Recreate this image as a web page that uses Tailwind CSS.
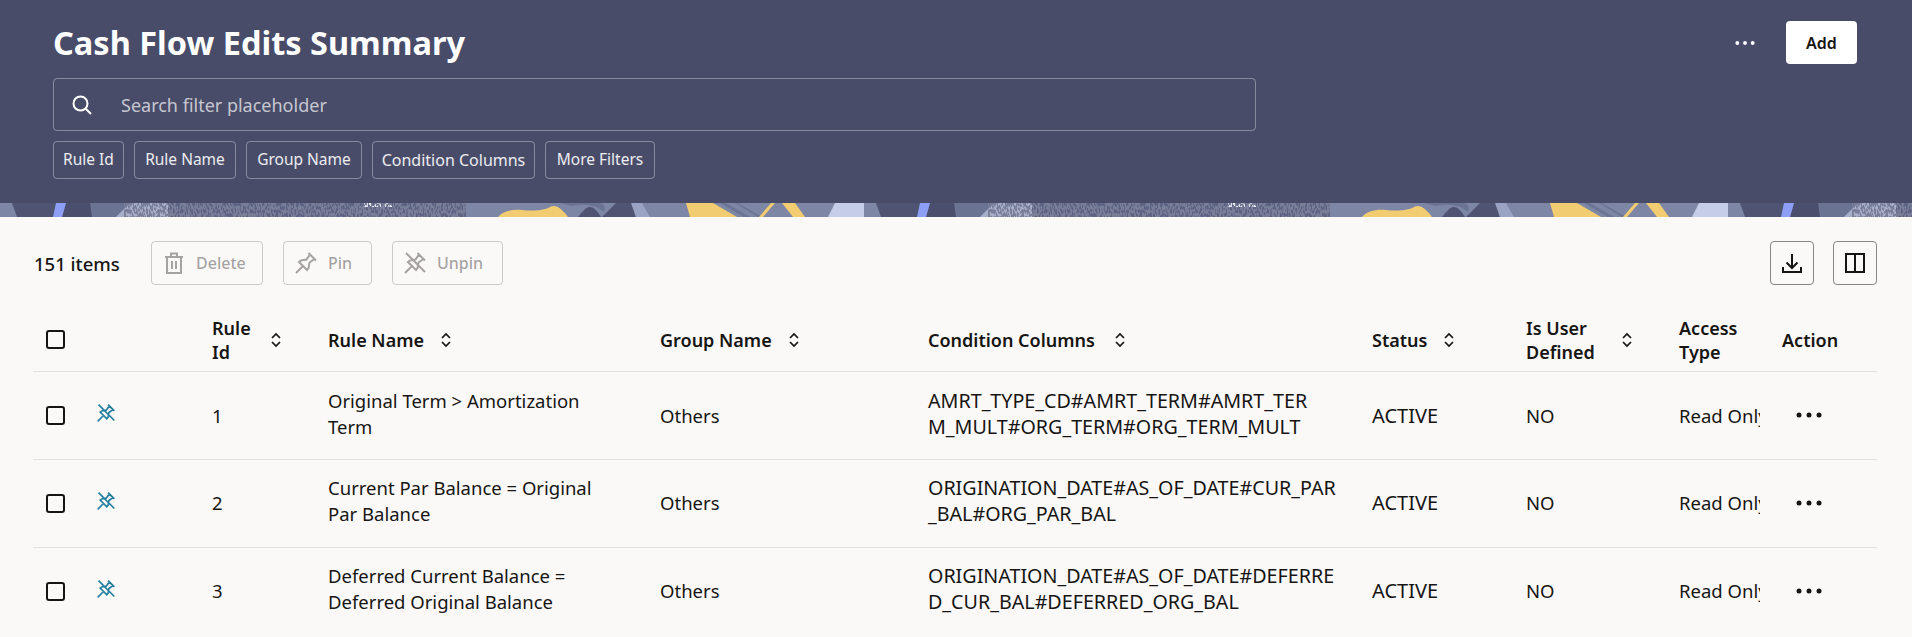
<!DOCTYPE html>
<html lang="en">
<head>
<meta charset="utf-8">
<title>Cash Flow Edits Summary</title>
<script src="https://cdn.jsdelivr.net/npm/@tailwindcss/browser@4"></script>
</head>
<body class="m-0 h-[637px] overflow-hidden bg-[#fbf9f8] font-['Noto_Sans',sans-serif] text-[#161513]">
<svg width="0" height="0" class="absolute">
  <defs>
    <symbol id="i-sort" viewBox="0 0 12 16"><path d="M2 6l4-4 4 4M2 10l4 4 4-4" fill="none" stroke="currentColor" stroke-width="1.7"/></symbol>
    <symbol id="i-unpin" viewBox="0 0 24 24"><path d="M14.500 2L22 9.500M16 3.500L12.500 8.500 7 9.500 5 11 13 19 14.500 17 15.500 11.500 20.500 8M9 15L2 22M3 2L22 21" fill="none" stroke="currentColor" stroke-width="2"/></symbol>
    <symbol id="i-dots" viewBox="0 0 26 6"><circle cx="3" cy="3" r="2.500" fill="currentColor"/><circle cx="13" cy="3" r="2.500" fill="currentColor"/><circle cx="23" cy="3" r="2.500" fill="currentColor"/></symbol>
  </defs>
</svg>

<header class="h-[203px] bg-[#484c69] pl-[53px] pr-[55px] pt-[21px]">
  <div class="flex h-[43px] items-center justify-between">
    <h1 class="text-[32.500px] leading-[43px] font-bold text-white">Cash Flow Edits Summary</h1>
    <div class="flex items-center gap-[31px]">
      <svg class="h-[6px] w-[20px] text-white" viewBox="0 0 26 6"><use href="#i-dots"/></svg>
      <button class="h-[43px] w-[71px] rounded-[4px] bg-white text-[16px] font-semibold text-[#161513]">Add</button>
    </div>
  </div>
  <div class="mt-[14px] flex h-[53px] w-[1203px] items-center rounded-[4px] border border-white/35 pl-[16px]">
    <svg class="h-[24px] w-[24px] text-white" viewBox="0 0 24 24" fill="none" stroke="currentColor" stroke-width="2"><circle cx="10.500" cy="10.500" r="7"/><path d="M15.500 15.500L21 21"/></svg>
    <span class="ml-[27px] pt-[1px] text-[18px] text-white/70">Search filter placeholder</span>
  </div>
  <div class="mt-[10px] flex gap-[10px] text-[15.500px] text-white/90">
    <button class="h-[38px] w-[71px] rounded-[4px] border border-white/35">Rule Id</button>
    <button class="h-[38px] w-[102px] rounded-[4px] border border-white/35">Rule Name</button>
    <button class="h-[38px] w-[116px] rounded-[4px] border border-white/35">Group Name</button>
    <button class="h-[38px] w-[163px] rounded-[4px] border border-white/35 text-[16px]">Condition Columns</button>
    <button class="h-[38px] w-[110px] rounded-[4px] border border-white/35">More Filters</button>
  </div>
</header>

<svg class="block h-[14px] w-full" viewBox="0 0 1912 14" preserveAspectRatio="none">
  <defs>
    <filter id="streak" x="0" y="0" width="100%" height="100%">
      <feTurbulence type="fractalNoise" baseFrequency="0.6 0.28" numOctaves="1" seed="7"/>
      <feColorMatrix values="0 0 0 0 0.19  0 0 0 0 0.21  0 0 0 0 0.32  9 0 0 0 -3.800"/>
    </filter>
    <filter id="streak2" x="0" y="0" width="100%" height="100%">
      <feTurbulence type="fractalNoise" baseFrequency="0.6 0.35" numOctaves="1" seed="3"/>
      <feColorMatrix values="0 0 0 0 0.80  0 0 0 0 0.82  0 0 0 0 0.90  6 0 0 0 -2.800"/>
    </filter>
    <g id="tile">
      <rect x="0" y="0" width="864" height="14" fill="#7e86a5"/>
      <polygon points="12,0 66,0 62,14 17,14" fill="#4f5473"/>
      <polygon points="66,0 92,0 92,14 62,14" fill="#4a4f6e"/>
      <polygon points="56,0 66,0 62,14 53,14" fill="#8c9ef5"/>
      <polygon points="90,0 130,0 116,14 92,14" fill="#6b7393"/>
      <polygon points="130,0 170,0 170,14 116,14" fill="#a7aeca"/>
      <rect x="124" y="0" width="46" height="14" filter="url(#streak)"/>
      <rect x="168" y="0" width="298" height="14" fill="#5d6383"/>
      <rect x="168" y="0" width="298" height="14" filter="url(#streak)"/>
      <rect x="364" y="0" width="28" height="4" filter="url(#streak2)"/>
      <path d="M498 14C503 8 512 6 522 7 531 8 543 8 550 4 556 1 562 6 568 14Z" fill="#f1cc71"/>
      <path d="M578 14C582 9 586 4 590 4 594 4 598 9 601 14Z" fill="#4f5473"/>
      <path d="M560 0H600C606 3 606 5 603 9 596 0 580 2 572 3Z" fill="#6b7393"/>
      <polygon points="616,0 632,0 636,14 602,14" fill="#4f5473"/>
      <polygon points="631,0 642,0 650,14 636,14" fill="#9aa3c4"/>
      <polygon points="686,0 713,0 737,14 690,14" fill="#f1cc71"/>
      <polygon points="720,0 726,0 750,14 744,14" fill="#6d7595"/>
      <polygon points="735,0 738,0 762,14 758,14" fill="#6d7595"/>
      <polygon points="771,0 775,0 763,14 759,14" fill="#f1cc71"/>
      <polygon points="782,0 795,0 805,14 793,14" fill="#f1cc71"/>
      <polygon points="835,0 876,0 881,14 828,14" fill="#c5cde8"/>
    </g>
  </defs>
  <use href="#tile" x="0"/>
  <use href="#tile" x="864"/>
  <use href="#tile" x="1728"/>
</svg>

<main class="pl-[33px] pr-[35px]">
  <div class="mt-[24px] flex h-[44px] items-center">
    <span class="ml-px w-[117px] pt-[1px] text-[18.500px] font-medium">151 items</span>
    <div class="flex gap-[20px] text-[16px] font-medium text-[#161513]/40">
      <button class="flex h-[44px] w-[112px] items-center gap-[10px] rounded-[4px] border border-[#161513]/20 pl-[10px]">
        <svg class="h-[24px] w-[24px] text-[#a5a3a0]" viewBox="0 0 24 24" fill="none" stroke="currentColor" stroke-width="2"><path d="M3 6h18M9 6V2.500h6V6M5 6v16h14V6M10 10v8M14 10v8"/></svg>Delete
      </button>
      <button class="flex h-[44px] w-[89px] items-center gap-[10px] rounded-[4px] border border-[#161513]/20 pl-[10px]">
        <svg class="h-[24px] w-[24px] text-[#a5a3a0]" viewBox="0 0 24 24" fill="none" stroke="currentColor" stroke-width="2"><path d="M14.500 2L22 9.500M16 3.500L12.500 8.500 7 9.500 5 11 13 19 14.500 17 15.500 11.500 20.500 8M9 15L2 22"/></svg>Pin
      </button>
      <button class="flex h-[44px] w-[111px] items-center gap-[10px] rounded-[4px] border border-[#161513]/20 pl-[10px]">
        <svg class="h-[24px] w-[24px] text-[#a5a3a0]"><use href="#i-unpin"/></svg>Unpin
      </button>
    </div>
    <div class="ml-auto flex gap-[19px]">
      <button class="flex h-[44px] w-[44px] items-center justify-center rounded-[4px] border border-[#161513]/50">
        <svg class="h-[24px] w-[24px]" viewBox="0 0 24 24" fill="none" stroke="currentColor" stroke-width="2"><path d="M12 3v14M6.500 11.500L12 17l5.500-5.500M3 16v5h18v-5"/></svg>
      </button>
      <button class="flex h-[44px] w-[44px] items-center justify-center rounded-[4px] border border-[#161513]/50">
        <svg class="h-[24px] w-[24px]" viewBox="0 0 24 24" fill="none" stroke="currentColor" stroke-width="2"><path d="M3 3h18v18H3zM12 3v18"/></svg>
      </button>
    </div>
  </div>

  <table class="mt-[24px] w-[1844px] table-fixed border-collapse text-left text-[18.500px] leading-[26px]">
    <colgroup>
      <col class="w-[55px]"><col class="w-[112px]"><col class="w-[116px]"><col class="w-[332px]"><col class="w-[268px]"><col class="w-[444px]"><col class="w-[154px]"><col class="w-[153px]"><col class="w-[103px]"><col class="w-[107px]">
    </colgroup>
    <thead class="text-[18px] font-semibold">
      <tr class="h-[62px] border-b border-[#161513]/10 leading-[24px]">
        <th class="pl-[13px] font-semibold"><span class="block h-[19px] w-[19px] rounded-[3px] border-2 border-[#161513]"></span></th>
        <th></th>
        <th class="px-[12px] font-semibold"><div class="flex items-center"><span class="w-[39px]">Rule Id</span><svg class="ml-[19px] h-[16px] w-[12px]"><use href="#i-sort"/></svg></div></th>
        <th class="px-[12px] font-semibold"><div class="flex items-center"><span>Rule Name</span><svg class="ml-[16px] h-[16px] w-[12px]"><use href="#i-sort"/></svg></div></th>
        <th class="px-[12px] font-semibold"><div class="flex items-center"><span>Group Name</span><svg class="ml-[16px] h-[16px] w-[12px]"><use href="#i-sort"/></svg></div></th>
        <th class="px-[12px] font-semibold"><div class="flex items-center"><span>Condition Columns</span><svg class="ml-[19px] h-[16px] w-[12px]"><use href="#i-sort"/></svg></div></th>
        <th class="px-[12px] font-semibold"><div class="flex items-center"><span>Status</span><svg class="ml-[16px] h-[16px] w-[12px]"><use href="#i-sort"/></svg></div></th>
        <th class="px-[12px] font-semibold"><div class="flex items-center"><span class="w-[72px]">Is User Defined</span><svg class="ml-[23px] h-[16px] w-[12px]"><use href="#i-sort"/></svg></div></th>
        <th class="px-[12px] font-semibold">Access Type</th>
        <th class="px-[12px] font-semibold">Action</th>
      </tr>
    </thead>
    <tbody>
      <tr class="h-[88px] border-b border-[#161513]/10">
        <td class="pl-[13px]"><span class="block h-[19px] w-[19px] rounded-[3px] border-2 border-[#161513]"></span></td>
        <td class="pl-[8px]"><svg class="mb-[4px] h-[20px] w-[20px] text-[#227e9e]"><use href="#i-unpin"/></svg></td>
        <td class="px-[12px] pt-[1px]">1</td>
        <td class="pb-[3px] pl-[12px] pr-[40px]">Original Term &gt; Amortization Term</td>
        <td class="px-[12px] pt-[1px]">Others</td>
        <td class="whitespace-nowrap pb-[3px] pl-[12px] text-[19.700px]">AMRT_TYPE_CD#AMRT_TERM#AMRT_TER<br>M_MULT#ORG_TERM#ORG_TERM_MULT</td>
        <td class="px-[12px] pt-[1px] text-[20px]">ACTIVE</td>
        <td class="px-[12px] pt-[1px]">NO</td>
        <td class="px-[12px] pt-[1px]"><div class="w-[81px] overflow-hidden whitespace-nowrap">Read Only</div></td>
        <td class="pl-[26px]"><svg class="h-[6px] w-[26px]"><use href="#i-dots"/></svg></td>
      </tr>
      <tr class="h-[88px] border-b border-[#161513]/10">
        <td class="pl-[13px]"><span class="block h-[19px] w-[19px] rounded-[3px] border-2 border-[#161513]"></span></td>
        <td class="pl-[8px]"><svg class="mb-[4px] h-[20px] w-[20px] text-[#227e9e]"><use href="#i-unpin"/></svg></td>
        <td class="px-[12px]">2</td>
        <td class="pb-[5px] pl-[12px] pr-[40px]">Current Par Balance = Original Par Balance</td>
        <td class="px-[12px]">Others</td>
        <td class="whitespace-nowrap pb-[5px] pl-[12px] text-[19.700px]">ORIGINATION_DATE#AS_OF_DATE#CUR_PAR<br>_BAL#ORG_PAR_BAL</td>
        <td class="px-[12px] text-[20px]">ACTIVE</td>
        <td class="px-[12px]">NO</td>
        <td class="px-[12px]"><div class="w-[81px] overflow-hidden whitespace-nowrap">Read Only</div></td>
        <td class="pl-[26px]"><svg class="h-[6px] w-[26px]"><use href="#i-dots"/></svg></td>
      </tr>
      <tr class="h-[88px]">
        <td class="pl-[13px]"><span class="block h-[19px] w-[19px] rounded-[3px] border-2 border-[#161513]"></span></td>
        <td class="pl-[8px]"><svg class="mb-[4px] h-[20px] w-[20px] text-[#227e9e]"><use href="#i-unpin"/></svg></td>
        <td class="px-[12px]">3</td>
        <td class="pb-[5px] pl-[12px] pr-[40px]">Deferred Current Balance = Deferred Original Balance</td>
        <td class="px-[12px]">Others</td>
        <td class="whitespace-nowrap pb-[5px] pl-[12px] text-[19.700px]">ORIGINATION_DATE#AS_OF_DATE#DEFERRE<br>D_CUR_BAL#DEFERRED_ORG_BAL</td>
        <td class="px-[12px] text-[20px]">ACTIVE</td>
        <td class="px-[12px]">NO</td>
        <td class="px-[12px]"><div class="w-[81px] overflow-hidden whitespace-nowrap">Read Only</div></td>
        <td class="pl-[26px]"><svg class="h-[6px] w-[26px]"><use href="#i-dots"/></svg></td>
      </tr>
    </tbody>
  </table>
</main>
</body>
</html>
